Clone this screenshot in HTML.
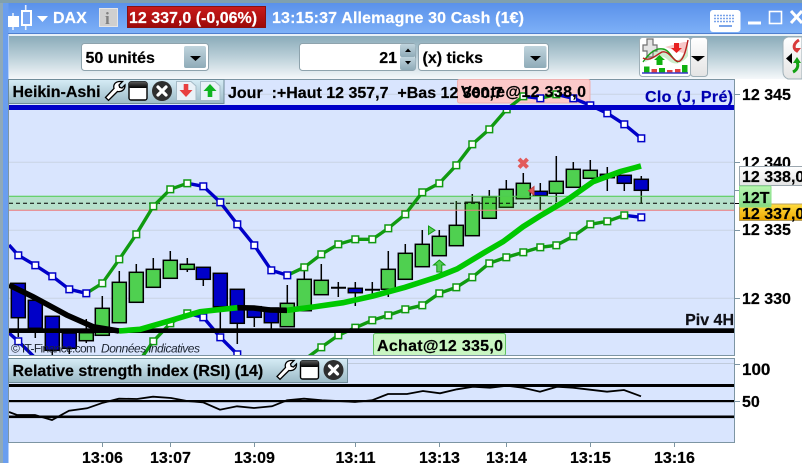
<!DOCTYPE html>
<html><head><meta charset="utf-8"><style>
html,body{margin:0;padding:0;background:#fff;width:802px;height:463px;overflow:hidden}
svg{display:block}
text{font-family:"Liberation Sans",sans-serif;font-weight:bold;font-size:16px;fill:#000;stroke:#000;stroke-width:.2}
.w{fill:#fff;stroke:#fff}
.g path{fill:none}
</style></head><body>
<svg width="802" height="463" viewBox="0 0 802 463" xmlns="http://www.w3.org/2000/svg">
<defs>
<linearGradient id="tb" x1="0" y1="0" x2="0" y2="1"><stop offset="0" stop-color="#5a91ea"/><stop offset="1" stop-color="#7db0f7"/></linearGradient>
<linearGradient id="tool" x1="0" y1="0" x2="0" y2="1"><stop offset="0" stop-color="#8aabb9"/><stop offset=".5" stop-color="#bcd0d9"/><stop offset="1" stop-color="#f5f8fa"/></linearGradient>
<linearGradient id="btn" x1="0" y1="0" x2="0" y2="1"><stop offset="0" stop-color="#c0d4dd"/><stop offset="1" stop-color="#8fabb8"/></linearGradient>
<linearGradient id="hdr" x1="0" y1="0" x2="0" y2="1"><stop offset="0" stop-color="#d6ecf6"/><stop offset="1" stop-color="#9bbac6"/></linearGradient>
<linearGradient id="red" x1="0" y1="0" x2="0" y2="1"><stop offset="0" stop-color="#c91c1c"/><stop offset="1" stop-color="#9c0808"/></linearGradient>
<linearGradient id="gold" x1="0" y1="0" x2="0" y2="1"><stop offset="0" stop-color="#ffdc40"/><stop offset="1" stop-color="#eda800"/></linearGradient>
<linearGradient id="grn" x1="0" y1="0" x2="0" y2="1"><stop offset="0" stop-color="#b2f5a8"/><stop offset="1" stop-color="#7cd884"/></linearGradient>
<linearGradient id="sil" x1="0" y1="0" x2="0" y2="1"><stop offset="0" stop-color="#fff"/><stop offset="1" stop-color="#e4e4e4"/></linearGradient>
<linearGradient id="win" x1="0" y1="0" x2="0" y2="1"><stop offset="0" stop-color="#555"/><stop offset="1" stop-color="#000"/></linearGradient>
<clipPath id="cp"><rect x="9" y="79" width="725" height="276"/></clipPath>
<clipPath id="cr"><rect x="9" y="359" width="725" height="83"/></clipPath>
<g id="wr"><path d="M105.5 97.5 L114 88.5 C113 85 115 82 119 81.5 L122.5 81.5 L119 85 L119.7 87.3 L122 88 L125 85 C125.3 89.3 122 92.2 117.5 91.5 L108.5 100.3 Z" fill="#fff" stroke="#000" stroke-width="1.3"/></g>
<g id="wn"><rect x="129" y="82" width="18" height="18" rx="2" fill="#fff" stroke="#000" stroke-width="1.4"/><rect x="129" y="82" width="18" height="6" rx="1.5" fill="url(#win)"/></g>
<g id="cl"><circle cx="162" cy="91" r="10" fill="#2e2e2e"/><path d="M158 87 L166 95 M166 87 L158 95" stroke="#fff" stroke-width="3.2" stroke-linecap="round"/></g>
</defs>

<!-- window frame -->
<rect x="0" y="0" width="802" height="463" fill="#fff"/>
<rect x="0" y="0" width="802" height="3" fill="#80a0ae"/>
<rect x="0" y="3" width="3" height="460" fill="#8fa9b8"/>
<rect x="3" y="3" width="799" height="30" fill="url(#tb)"/>
<rect x="3" y="3" width="5.5" height="460" fill="#6a9eef"/>
<rect x="8" y="33" width="794" height="1" fill="#4f7fcf"/>
<rect x="9" y="34" width="793" height="2" fill="#e8f0f6"/>
<rect x="9" y="36" width="793" height="43" fill="url(#tool)"/>

<!-- title bar -->
<path d="M13 13V30M25.7 5V30" stroke="#fff" stroke-width="1.6" opacity=".85"/>
<rect x="8" y="16" width="11" height="11" fill="#fff"/>
<rect x="22" y="11" width="9" height="14" fill="#7aa8f4" stroke="#fff" stroke-width="2"/>
<path d="M37 16H48L42.5 22Z" fill="#fff"/>
<text x="53" y="23" class="w">DAX</text>
<rect x="99.5" y="8.5" width="18" height="18" fill="#cfcfcf" stroke="#e6e6e6"/>
<text x="105" y="24" style="font-family:'Liberation Serif',serif;font-size:17px;fill:#7f7f7f;stroke:none">i</text>
<rect x="127.5" y="6.5" width="138" height="21" fill="url(#red)" stroke="#8a1010"/>
<text x="129" y="23" class="w">12 337,0 (-0,06%)</text>
<text x="272" y="23" class="w" textLength="252">13:15:37 Allemagne 30 Cash (1€)</text>
<rect x="710" y="10" width="30.5" height="22" rx="3" fill="#fff"/>
<path d="M714 15.5H735M714 18.5H735M714 21.5H735" stroke="#7aa4ea" stroke-width="1.6" stroke-dasharray="2 1"/>
<rect x="719" y="25" width="13" height="2" fill="#7aa4ea"/>
<rect x="748" y="21.5" width="13" height="3" fill="#fff"/>
<rect x="769.5" y="11.5" width="12" height="12" fill="none" stroke="#fff" stroke-width="1.6"/>
<path d="M791 11L802 23M802 11L791 23" stroke="#fff" stroke-width="3"/>

<!-- toolbar controls -->
<rect x="81.5" y="43.5" width="127" height="27" rx="3" fill="#fff" stroke="#8ea3ad"/>
<text x="85.5" y="63">50 unités</text>
<rect x="184" y="46" width="22" height="22" rx="2" fill="url(#btn)"/>
<path d="M190 56H201L195.5 61Z" fill="#000"/>
<rect x="299.5" y="43.5" width="116" height="27" rx="3" fill="#fff" stroke="#8ea3ad"/>
<text x="397" y="63" text-anchor="end">21</text>
<rect x="400" y="44" width="15.5" height="13" rx="2" fill="url(#btn)"/>
<rect x="400" y="57" width="15.5" height="13" rx="2" fill="url(#btn)"/>
<path d="M405 52H411L408 48.5ZM405 61H411L408 64.5Z" fill="#000"/>
<rect x="418.5" y="43.5" width="130" height="27" rx="3" fill="#fff" stroke="#8ea3ad"/>
<text x="422.5" y="63">(x) ticks</text>
<rect x="524" y="46" width="22.5" height="22" rx="2" fill="url(#btn)"/>
<path d="M530 56H541L535.5 61Z" fill="#000"/>

<!-- indicator button -->
<rect x="639.5" y="37.5" width="51" height="39" rx="3" fill="#fff" stroke="#9fb0b8"/>
<rect x="690.5" y="37.5" width="17" height="39" rx="3" fill="url(#sil)" stroke="#9fb0b8"/>
<path d="M691 56H705L698 61.5Z" fill="#000"/>
<path d="M645 58C652 46 658 46 664 50C672 56 672 62 678 60C684 56 686 48 688 42L688 56C682 64 674 66 668 60C660 52 652 60 645 62Z" fill="#cdeccd"/>
<path d="M665 47L684 42L688 42L686 54Z" fill="#f7c8c8"/>
<path d="M645 48H649V42H655V48H659V54H655V60H649V54H645Z" transform="translate(-2 -3)" fill="#e4e4e4" stroke="#707070" stroke-width="1.2"/>
<path d="M643 62C650 52 656 48 663 49C670 50 672 60 678 62" fill="none" stroke="#18a018" stroke-width="1.4"/>
<path d="M643 58C650 62 656 55 662 52C670 50 674 64 680 61C684 58 686 50 688 40" fill="none" stroke="#b82020" stroke-width="1.4"/>
<path d="M674 43H679V48H682L676.5 53L671 48H674Z" fill="#e82020"/>
<path d="M656.5 65V60H654L659.5 55L665 60H662.5V65Z" fill="#10b010"/>
<path d="M644 66.5h5.5v6h-5.5zM659 68h6v4.5h-6zM682 65h5.5v7.5h-5.5z" fill="#10b010"/>
<path d="M651.5 69h5.5v3.5h-5.5zM667 70h5.5v2.5h-5.5zM675 69h5.5v3.5h-5.5z" fill="#e04040"/>
<path d="M642 73H688" stroke="#3a3ac8" stroke-width="1.4"/>

<!-- partial button -->
<path d="M802 37H788Q783 38 783 43V72Q783 77 788 79H802Z" fill="url(#sil)" stroke="#9fb0b8"/>
<path d="M786 58.5L792 53V64Z" fill="#000"/>
<path d="M797 51C792 48 794 43 799 40" fill="none" stroke="#d83a3a" stroke-width="3"/>
<path d="M793 48H801L797 53Z" fill="#d83a3a"/>
<path d="M797 62C799 66 797 70 793 72" fill="none" stroke="#12a012" stroke-width="3"/>
<path d="M793 63H801L797 57Z" fill="#12a012"/>

<!-- main chart -->
<rect x="8.5" y="79.5" width="726" height="276" fill="#d9e5fe" stroke="#7d95a3"/>
<g clip-path="url(#cp)">
<path d="M9 94.3H734M9 162.3H734M9 230.3H734M9 298.3H734" stroke="#c9d3e3" stroke-width="1"/>
<rect x="457.5" y="79.5" width="132.5" height="23.5" rx="2" fill="#fcc9c9" stroke="#f0b0b0"/>

<!-- candles -->
<g stroke="#000" stroke-width="1.5">
<path d="M18.3 317V337M35.3 328V338M52.3 350V355M69.3 348V354M86.3 319V343M102.3 296V335M119.3 271V322M136.3 264V302M153.3 258V287M170.3 251V278M187.3 258V272M203.3 279V286M220.3 306V330M237.3 323V344M254.3 317V327M271.3 322V330M287.3 285V327M304.3 271V311M321.3 264V294M338.3 282V297M355.3 282V306M372.3 282V298M388.3 251V297M405.3 244V279M422.3 230V267M439.3 230V256M456.3 201V246M472.3 194V236M489.3 190V218M506.3 180V207M523.3 173V198M540.3 183V210M556.3 156V202M573.3 162V187M590.3 160V178M607.3 167V191M624.3 175V191M641.3 176V203" fill="none"/>
<g fill="#0000c8">
<rect x="11.3" y="283.3" width="14" height="34.4"/>
<rect x="28.3" y="300.3" width="14" height="28"/>
<rect x="45.3" y="316.3" width="14" height="34"/>
<rect x="62.3" y="333" width="14" height="15.3"/>
<rect x="196.3" y="267.3" width="14" height="12"/>
<rect x="213.3" y="273.3" width="14" height="33.4"/>
<rect x="230.3" y="289.3" width="14" height="34"/>
<rect x="247.3" y="306.7" width="14" height="10.6"/>
<rect x="264.3" y="308" width="14" height="14.7"/>
<rect x="348.3" y="288.3" width="14" height="4.4"/>
<rect x="533.3" y="191.3" width="14" height="4.4"/>
<rect x="600.3" y="174.3" width="14" height="3.4"/>
<rect x="617.3" y="175.3" width="14" height="8"/>
<rect x="634.3" y="179.3" width="14" height="11"/>
</g>
<g fill="#4fd050">
<rect x="79.3" y="332.7" width="14" height="8"/>
<rect x="95.3" y="308.3" width="14" height="27"/>
<rect x="112.3" y="282.3" width="14" height="40.4"/>
<rect x="129.3" y="272.3" width="14" height="30"/>
<rect x="146.3" y="269.3" width="14" height="18"/>
<rect x="163.3" y="260.3" width="14" height="18"/>
<rect x="180.3" y="264.3" width="14" height="5"/>
<rect x="280.3" y="303.3" width="14" height="23.4"/>
<rect x="297.3" y="279.3" width="14" height="31.4"/>
<rect x="314.3" y="280.3" width="14" height="14.4"/>
<rect x="381.3" y="269.3" width="14" height="20"/>
<rect x="398.3" y="253.3" width="14" height="26"/>
<rect x="415.3" y="244.3" width="14" height="22.4"/>
<rect x="432.3" y="236.3" width="14" height="19.4"/>
<rect x="449.3" y="225.3" width="14" height="20.4"/>
<rect x="465.3" y="202.3" width="14" height="33.4"/>
<rect x="482.3" y="196.7" width="14" height="21.6"/>
<rect x="499.3" y="189.3" width="14" height="18"/>
<rect x="516.3" y="183.3" width="14" height="15.4"/>
<rect x="549.3" y="181.3" width="14" height="12"/>
<rect x="566.3" y="169.3" width="14" height="18"/>
<rect x="583.3" y="170.3" width="14" height="8"/>
</g>
<path d="M331 287.7H346M365 289.7H380" stroke-width="2" fill="none"/>
</g>

<!-- support zone -->
<rect x="9" y="196.3" width="725" height="14" fill="#50d232" fill-opacity=".25"/>
<path d="M9 196.3H734" stroke="#4fcc4f" stroke-width="1"/>
<path d="M9 210.3H734" stroke="#ec7a7a" stroke-width="1"/>
<path d="M9 203.3H734" stroke="#000" stroke-width="1" stroke-dasharray="4 3"/>

<!-- bands -->
<g fill="none" stroke-width="3.4">
<path stroke="#0000c8" d="M9 245L18.3 255.3L35.3 265.3L52.3 276.3L69.3 289.3L86.3 293.3M187.3 183.3L203.3 186.3L220.3 202.3L237.3 224.3L254.3 245.3L271.3 270.3L287.3 275.3M523.3 96.3L540.3 98.3M556.3 94.3L573.3 98.3L590.3 105.3L607.3 113.3L624.3 124.3L641.3 138.3"/>
<path stroke="#109a10" d="M86.3 293.3L102.3 283.3L119.3 259.3L136.3 234.3L153.3 206.3L170.3 189.3L187.3 183.3M287.3 275.3L304.3 267.3L321.3 254.3L338.3 244.3L355.3 239.3L372.3 239.3L388.3 228.3L405.3 214.3L422.3 192.3L439.3 183.3L456.3 165.3L472.3 144.3L489.3 129.3L506.7 109.3L523.3 96.3M540.3 98.3L556.3 94.3"/>
<path stroke="#0000c8" d="M9 333L18.3 341.3L35.3 358M187.3 313.3L203.3 317.3L220.3 337.3L237.3 354.3L254 375M624.3 215.3L641.3 217.3"/>
<path stroke="#109a10" d="M140 360L153.3 341.3L170.3 323.3L187.3 313.3M304 360L321.3 347.3L338.3 335.3L355.3 327.7L372.3 320.3L388.3 315.3L405.3 309.3L422.3 305.3L439.3 293.3L456.3 287.3L472.3 277.3L489.3 263.3L506.3 257.3L523.3 252.3L540.3 247.3L556.3 245.3L573.3 236.3L590.3 224.3L607.3 221.3L624.3 215.3"/>
</g>
<g fill="#fff" stroke="#109a10" stroke-width="1.5">
<path id="gn" d="M99 280h6.6v6.6h-6.6zM116 256h6.6v6.6h-6.6zM133 231h6.6v6.6h-6.6zM150 203h6.6v6.6h-6.6zM167 186h6.6v6.6h-6.6zM184 180h6.6v6.6h-6.6zM301 264h6.6v6.6h-6.6zM318 251h6.6v6.6h-6.6zM335 241h6.6v6.6h-6.6zM352 236h6.6v6.6h-6.6zM369 236h6.6v6.6h-6.6zM385 225h6.6v6.6h-6.6zM402 211h6.6v6.6h-6.6zM419 189h6.6v6.6h-6.6zM436 180h6.6v6.6h-6.6zM453 162h6.6v6.6h-6.6zM469 141h6.6v6.6h-6.6zM486 126h6.6v6.6h-6.6zM503.4 106h6.6v6.6h-6.6zM520 93h6.6v6.6h-6.6zM553 91h6.6v6.6h-6.6z"/>
<path d="M150 338h6.6v6.6h-6.6zM167 320h6.6v6.6h-6.6zM184 310h6.6v6.6h-6.6zM318 344h6.6v6.6h-6.6zM335 332h6.6v6.6h-6.6zM352 324.4h6.6v6.6h-6.6zM369 317h6.6v6.6h-6.6zM385 312h6.6v6.6h-6.6zM402 306h6.6v6.6h-6.6zM419 302h6.6v6.6h-6.6zM436 290h6.6v6.6h-6.6zM453 284h6.6v6.6h-6.6zM469 274h6.6v6.6h-6.6zM486 260h6.6v6.6h-6.6zM503 254h6.6v6.6h-6.6zM520 249h6.6v6.6h-6.6zM537 244h6.6v6.6h-6.6zM553 242h6.6v6.6h-6.6zM570 233h6.6v6.6h-6.6zM587 221h6.6v6.6h-6.6zM604 218h6.6v6.6h-6.6zM621 212h6.6v6.6h-6.6z"/>
</g>
<g fill="#fff" stroke="#0000c8" stroke-width="1.5">
<path d="M15 252h6.6v6.6h-6.6zM32 262h6.6v6.6h-6.6zM49 273h6.6v6.6h-6.6zM66 286h6.6v6.6h-6.6zM83 290h6.6v6.6h-6.6zM200 183h6.6v6.6h-6.6zM217 199h6.6v6.6h-6.6zM234 221h6.6v6.6h-6.6zM251 242h6.6v6.6h-6.6zM268 267h6.6v6.6h-6.6zM284 272h6.6v6.6h-6.6zM537 95h6.6v6.6h-6.6zM570 95h6.6v6.6h-6.6zM587 102h6.6v6.6h-6.6zM604 110h6.6v6.6h-6.6zM621 121h6.6v6.6h-6.6zM638 135h6.6v6.6h-6.6zM15 338h6.6v6.6h-6.6zM200 314h6.6v6.6h-6.6zM217 334h6.6v6.6h-6.6zM234 351h6.6v6.6h-6.6zM638 214h6.6v6.6h-6.6z"/>
</g>

<!-- horizontal bars -->
<rect x="9" y="105" width="725" height="5" fill="#0000c8"/>
<rect x="9" y="328.3" width="725" height="4.7" fill="#000"/>

<!-- moving average -->
<g fill="none" stroke-width="5.6">
<path stroke="#000" d="M9 285L33 296.7L66.7 315L93 326.7L119 331"/>
<path stroke="#000" d="M237.3 307.7L254 308L270 310L287 310.3"/>
<path stroke="#00c800" d="M119 331L140 329.3L170 320.7L200 311.7L237.3 307.7"/>
<path stroke="#00c800" d="M287 310.3L313 307L343 302.7L373 296L405 287.3L437 277L457 269L483 253.3L503 241.7L523 226.7L540 216L567 200L593 181.7L620 171.7L641 166"/>
</g>

<!-- markers -->
<path d="M428.5 226L435 230.3L428.5 234.5Z" fill="#55cc55" stroke="#109a10"/>
<path d="M436.8 272V265H433.5L439.3 260L445 265H441.8V272Z" fill="#55cc55" stroke="#109a10"/>
<path d="M534 186.5L528.5 190.7L534 195Z" fill="#e05a5a" stroke="#c04040"/>
<path d="M519 159L527.5 167.5M527.5 159L519 167.5" stroke="#e25a5a" stroke-width="4"/>

<!-- labels -->
<text x="228" y="98">Jour&#160;&#160;:+Haut 12 357,7&#160;&#160;+Bas 12 300,7</text>
<text x="461" y="97" textLength="125">Vente@12 338,0</text>
<text x="645" y="102" textLength="88" style="fill:#0000b0;stroke:#0000b0">Clo (J, Pré)</text>
<text x="734" y="325" text-anchor="end" style="fill:#101018">Piv 4H</text>
<text x="11" y="352.5" textLength="85" style="font-weight:normal;font-size:12px;fill:#1c2430;stroke:none">© IT-Finance.com</text>
<text x="101" y="352.5" textLength="99" style="font-weight:normal;font-style:italic;font-size:12px;fill:#1c2430;stroke:none">Données indicatives</text>
<rect x="373.5" y="333.5" width="132" height="22" rx="2" fill="#c9f6c2" stroke="#62c062"/>
<text x="377" y="351" textLength="126">Achat@12 335,0</text>
</g>

<!-- heikin header -->
<rect x="8.5" y="79.5" width="215.5" height="24" fill="url(#hdr)" stroke="#6f8c99"/>
<text x="12.5" y="97">Heikin-Ashi</text>
<use href="#wr"/>
<use href="#wn"/>
<use href="#cl"/>
<path d="M176.5 81.5H191L196 86V100.5H176.5Z" fill="#eaf2f8" stroke="#a6bcc8"/>
<path d="M183.7 84V90H179.5L186 97L192.5 90H188.3V84Z" fill="#e84040"/>
<path d="M200.5 81.5H215L220 86V100.5H200.5Z" fill="#eaf2f8" stroke="#a6bcc8"/>
<path d="M207.7 97V91H203.5L210 84L216.5 91H212.3V97Z" fill="#10b420"/>

<!-- RSI panel -->
<rect x="8.5" y="358.5" width="726" height="84" fill="#d9e5fe" stroke="#7d95a3"/>
<g clip-path="url(#cr)">
<path d="M9 363.5H734" stroke="#c0cbdc"/>
<rect x="9" y="384" width="725" height="3" fill="#000"/>
<rect x="9" y="400" width="725" height="2.2" fill="#000"/>
<rect x="9" y="415.5" width="725" height="2.6" fill="#000"/>
<path fill="none" stroke="#000" stroke-width="1.8" d="M9 412L17 415L35 415L52 420L69 410.7L87 408.3L103 402.7L119 398.7L137 399L153 396.7L171 398L187 401L203 402.3L220 409.7L237 406.3L254 408L272 406.3L287 400.3L304 398.7L322 400.3L338 401L355 402L372 400.3L388 394L407 394L423 391L440 393.3L457 389.3L473 386.7L490 387.7L507 385.7L523 387.7L540 391.7L557 386.7L573 387.7L590 389.7L607 391.7L624 390L641 396.3"/>
</g>
<rect x="8.5" y="358.5" width="339" height="24" fill="url(#hdr)" stroke="#6f8c99"/>
<text x="12.5" y="376">Relative strength index (RSI) (14)</text>
<use href="#wr" transform="translate(171.5 279)"/>
<use href="#wn" transform="translate(171.5 279)"/>
<use href="#cl" transform="translate(171.5 279)"/>

<!-- axis ticks -->
<path d="M735 94.5H740M735 162.5H740M735 190.5H740M735 230.5H740M735 298.5H740M735 364.5H740M735 401.5H740" stroke="#7d95a3"/>
<path d="M735 203.5H740" stroke="#000"/>
<path d="M102.5 443V447M170.5 443V447M254.5 443V447M355.5 443V447M439.5 443V447M506.5 443V447M590.5 443V447M674.5 443V447" stroke="#7d95a3"/>

<!-- price labels -->
<text x="742" y="100">12 345</text>
<text x="742" y="168">12 340</text>
<rect x="739.5" y="166.5" width="64" height="19" fill="url(#sil)" stroke="#9aa6ae"/>
<text x="742" y="182">12 338,0</text>
<rect x="739.5" y="204" width="64" height="16.5" fill="url(#gold)" stroke="#b8a060"/>
<text x="742" y="219">12 337,0</text>
<rect x="739.5" y="186" width="31.5" height="21" rx="1" fill="url(#grn)" fill-opacity=".92" stroke="#8ae08a"/>
<text x="742" y="203">12T</text>
<text x="742" y="235">12 335</text>
<text x="742" y="304">12 330</text>
<text x="742" y="375" style="font-size:17px">100</text>
<text x="742" y="407">50</text>

<!-- time labels -->
<text x="102.5" y="463" text-anchor="middle">13:06</text>
<text x="170.5" y="463" text-anchor="middle">13:07</text>
<text x="254.5" y="463" text-anchor="middle">13:09</text>
<text x="355.5" y="463" text-anchor="middle">13:11</text>
<text x="439.5" y="463" text-anchor="middle">13:13</text>
<text x="506.5" y="463" text-anchor="middle">13:14</text>
<text x="590.5" y="463" text-anchor="middle">13:15</text>
<text x="674.5" y="463" text-anchor="middle">13:16</text>
</svg>
</body></html>
